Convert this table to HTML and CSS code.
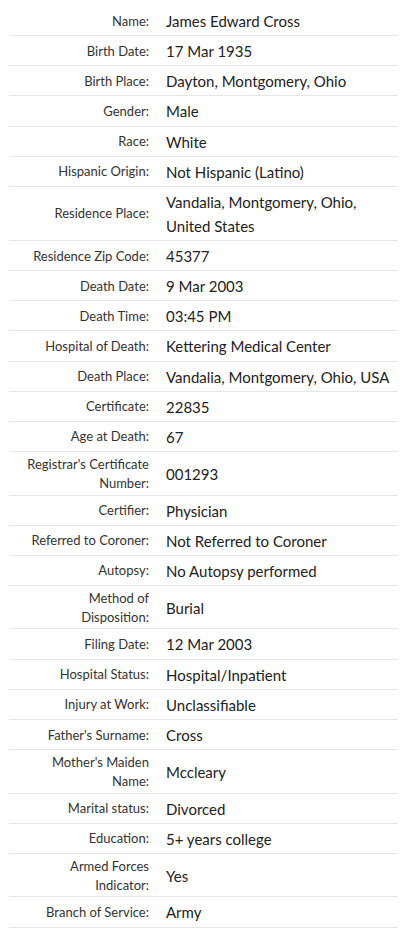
FILE: index.html
```html
<!DOCTYPE html>
<html lang="en">
<head>
  <meta charset="UTF-8">
  <meta name="viewport" content="width=device-width, initial-scale=1">
  <title>Record Details</title>
  <link rel="stylesheet" href="styles.css">
</head>
<body>
  <div class="record">
    <div class="row"><div class="label">Name:</div><div class="value">James Edward Cross</div></div>
    <div class="row"><div class="label">Birth Date:</div><div class="value">17 Mar 1935</div></div>
    <div class="row"><div class="label">Birth Place:</div><div class="value">Dayton, Montgomery, Ohio</div></div>
    <div class="row"><div class="label">Gender:</div><div class="value">Male</div></div>
    <div class="row"><div class="label">Race:</div><div class="value">White</div></div>
    <div class="row"><div class="label">Hispanic Origin:</div><div class="value">Not Hispanic (Latino)</div></div>
    <div class="row"><div class="label">Residence Place:</div><div class="value">Vandalia, Montgomery, Ohio, United States</div></div>
    <div class="row"><div class="label">Residence Zip Code:</div><div class="value">45377</div></div>
    <div class="row"><div class="label">Death Date:</div><div class="value">9 Mar 2003</div></div>
    <div class="row"><div class="label">Death Time:</div><div class="value">03:45 PM</div></div>
    <div class="row"><div class="label">Hospital of Death:</div><div class="value">Kettering Medical Center</div></div>
    <div class="row"><div class="label">Death Place:</div><div class="value">Vandalia, Montgomery, Ohio, USA</div></div>
    <div class="row"><div class="label">Certificate:</div><div class="value">22835</div></div>
    <div class="row"><div class="label">Age at Death:</div><div class="value">67</div></div>
    <div class="row"><div class="label">Registrar's Certificate Number:</div><div class="value">001293</div></div>
    <div class="row"><div class="label">Certifier:</div><div class="value">Physician</div></div>
    <div class="row"><div class="label">Referred to Coroner:</div><div class="value">Not Referred to Coroner</div></div>
    <div class="row"><div class="label">Autopsy:</div><div class="value">No Autopsy performed</div></div>
    <div class="row"><div class="label">Method of Disposition:</div><div class="value">Burial</div></div>
    <div class="row"><div class="label">Filing Date:</div><div class="value">12 Mar 2003</div></div>
    <div class="row"><div class="label">Hospital Status:</div><div class="value">Hospital/Inpatient</div></div>
    <div class="row"><div class="label">Injury at Work:</div><div class="value">Unclassifiable</div></div>
    <div class="row"><div class="label">Father's Surname:</div><div class="value">Cross</div></div>
    <div class="row"><div class="label">Mother's Maiden Name:</div><div class="value">Mccleary</div></div>
    <div class="row"><div class="label">Marital status:</div><div class="value">Divorced</div></div>
    <div class="row"><div class="label">Education:</div><div class="value">5+ years college</div></div>
    <div class="row"><div class="label">Armed Forces Indicator:</div><div class="value">Yes</div></div>
    <div class="row"><div class="label">Branch of Service:</div><div class="value">Army</div></div>
  </div>
</body>
</html>
```

FILE: styles.css
```css
body {
  margin: 0;
  font-family: Lato, "Liberation Sans", sans-serif;
  color: #333;
  background: #fff;
}
.record {
  padding: 6px 9px 0;
}
.row {
  display: grid;
  grid-template-columns: 140px 1fr;
  column-gap: 17px;
  align-items: center;
  padding: 3px 0 2.15px;
  border-bottom: 1px solid #e6e6e6;
}
.label {
  padding-left: 14px;
  text-align: right;
  font-size: 13px;
  line-height: 18.7px;
}
.value {
  font-size: 15px;
  line-height: 24px;
  color: #222;
}
```
